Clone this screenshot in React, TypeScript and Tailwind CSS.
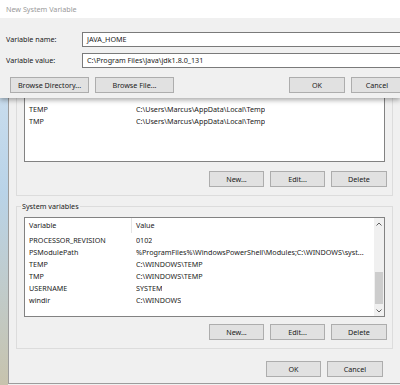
import React from 'react';

const font = { fontFamily: '"Noto Sans", "Open Sans", sans-serif' };

interface RowData {
  name: string;
  value: string;
}

const userRows: RowData[] = [
  { name: 'TEMP', value: 'C:\\Users\\Marcus\\AppData\\Local\\Temp' },
  { name: 'TMP', value: 'C:\\Users\\Marcus\\AppData\\Local\\Temp' },
];

const systemRows: RowData[] = [
  { name: 'PROCESSOR_REVISION', value: '0102' },
  { name: 'PSModulePath', value: '%ProgramFiles%\\WindowsPowerShell\\Modules;C:\\WINDOWS\\syst...' },
  { name: 'TEMP', value: 'C:\\WINDOWS\\TEMP' },
  { name: 'TMP', value: 'C:\\WINDOWS\\TEMP' },
  { name: 'USERNAME', value: 'SYSTEM' },
  { name: 'windir', value: 'C:\\WINDOWS' },
];

const Button: React.FC<{ label: string; className?: string }> = ({ label, className = '' }) => (
  <div
    className={`flex items-center justify-center shrink-0 h-[16px] bg-[#e1e1e1] border border-[#adadad] text-[7.2px] text-[#1a1a1a] whitespace-nowrap ${className}`}
  >
    {label}
  </div>
);

const Row: React.FC<{ row: RowData }> = ({ row }) => (
  <div className="flex h-[12px] items-center text-[7.2px] text-[#1a1a1a] whitespace-nowrap">
    <div className="w-[111px] pl-[4px] shrink-0">{row.name}</div>
    <div className="overflow-hidden">{row.value}</div>
  </div>
);

const Scrollbar: React.FC = () => (
  <div className="flex flex-col w-[10px] h-full bg-[#f0f0f0] shrink-0">
    <div className="h-[12px] flex items-center justify-center">
      <svg width="6" height="4" viewBox="0 0 6 4">
        <path d="M0.5 3.5 L3 1 L5.5 3.5" fill="none" stroke="#606060" strokeWidth="1" />
      </svg>
    </div>
    <div className="flex-1 flex flex-col justify-end pb-[2px]">
      <div className="h-[32px] bg-[#cdcdcd] mx-[1px]" />
    </div>
    <div className="h-[10px] flex items-center justify-center">
      <svg width="6" height="4" viewBox="0 0 6 4">
        <path d="M0.5 0.5 L3 3 L5.5 0.5" fill="none" stroke="#606060" strokeWidth="1" />
      </svg>
    </div>
  </div>
);

const ActionButtons: React.FC = () => (
  <div className="flex gap-[6px] ml-[185px]">
    <Button label="New..." className="w-[55px] h-[15px]" />
    <Button label="Edit..." className="w-[55px] h-[15px]" />
    <Button label="Delete" className="w-[56px] h-[15px]" />
  </div>
);

export default function App() {
  return (
    <div className="relative w-[400px] h-[385px] overflow-hidden bg-[#f0f0f0]" style={font}>
      {/* desktop strip on the left */}
      <div className="absolute left-0 top-0 w-[8px] h-full bg-gradient-to-b from-[#d8e6f2] via-[#b9d3e8] to-[#c7c3ad]" />

      {/* Environment Variables window behind */}
      <div className="absolute left-[8px] top-0 w-[400px] h-[384px] bg-[#f0f0f0] border-l border-b border-[#9c9c9c] flex flex-col pl-[7px]">
        {/* user variables */}
        <div className="mt-[50px] w-[377px] h-[146px] border border-[#dcdcdc] flex flex-col pl-[7px] pt-[12px]">
          <div className="w-[361px] h-[99px] bg-white border border-[#828282] flex flex-col pt-[39px]">
            {userRows.map((r) => (
              <Row key={r.name} row={r} />
            ))}
          </div>
          <div className="mt-[9px]">
            <ActionButtons />
          </div>
        </div>

        {/* system variables */}
        <div className="relative mt-[10px] w-[377px] h-[143px] border border-[#dcdcdc] flex flex-col pl-[7px] pt-[10px]">
          <div className="absolute left-[4px] top-[-7px] px-[1px] bg-[#f0f0f0] text-[7.2px] text-[#1a1a1a] leading-[12px]">
            System variables
          </div>
          <div className="w-[361px] h-[100px] bg-white border border-[#828282] flex">
            <div className="flex-1 flex flex-col min-w-0">
              <div className="flex h-[15px] items-center text-[7.2px] text-[#1a1a1a]">
                <div className="w-[107px] pl-[4px] h-full flex items-center border-r border-[#e5e5e5]">Variable</div>
                <div className="pl-[4px]">Value</div>
              </div>
              <div className="h-[1px]" />
              {systemRows.map((r) => (
                <Row key={r.name} row={r} />
              ))}
            </div>
            <Scrollbar />
          </div>
          <div className="mt-[7px]">
            <ActionButtons />
          </div>
        </div>

        {/* OK / Cancel */}
        <div className="mt-[12px] flex gap-[6px] ml-[250px]">
          <Button label="OK" className="w-[55px] h-[16px]" />
          <Button label="Cancel" className="w-[56px] h-[16px]" />
        </div>
      </div>

      {/* New System Variable dialog */}
      <div className="absolute left-0 top-0 w-[400px] h-[98px] bg-[#f0f0f0] flex flex-col shadow-[0_2px_5px_rgba(0,0,0,0.35)]">
        <div className="h-[18px] bg-white flex items-center pl-[6px] text-[7.2px] text-[#9a9a9a]">New System Variable</div>
        <div className="flex flex-col pt-[14px]">
          <div className="flex items-center h-[15px]">
            <div className="w-[82px] shrink-0 pl-[6px] text-[7.2px] text-[#1a1a1a]">Variable name:</div>
            <div className="w-[318px] shrink-0 h-full bg-white border border-[#7a7a7a] border-r-0 flex items-center pl-[4px] text-[7.2px] text-[#1a1a1a]">
              JAVA_HOME
            </div>
          </div>
          <div className="flex items-center h-[15px] mt-[6px]">
            <div className="w-[82px] shrink-0 pl-[6px] text-[7.2px] text-[#1a1a1a]">Variable value:</div>
            <div className="w-[318px] shrink-0 h-full bg-white border border-[#7a7a7a] border-r-0 flex items-center pl-[4px] text-[7.2px] text-[#1a1a1a]">
              C:\Program Files\Java\jdk1.8.0_131
            </div>
          </div>
          <div className="flex mt-[9px] pl-[10px]">
            <Button label="Browse Directory..." className="w-[79px]" />
            <Button label="Browse File..." className="w-[79px] ml-[6px]" />
            <Button label="OK" className="w-[56px] ml-[115px]" />
            <Button label="Cancel" className="w-[52px] ml-[6px]" />
          </div>
        </div>
      </div>
    </div>
  );
}
